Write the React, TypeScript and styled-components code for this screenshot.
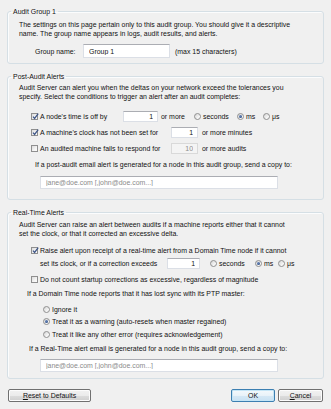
import styled, { createGlobalStyle } from 'styled-components';

const Global = createGlobalStyle`
  html, body {
    margin: 0;
    padding: 0;
    background: #f0f0f0;
  }
  body {
    font-family: "Liberation Sans", Arial, sans-serif;
    font-size: 6.95px;
    color: #111;
  }
`

const Page = styled.div`
  width: 331px;
  height: 409px;
  box-sizing: border-box;
  padding: 7px 7px 0 7px;
  display: flex;
  flex-direction: column;
`

const Group = styled.fieldset<{ $top: number; $bottom: number }>`
  margin: ${p => p.$top}px 0 0 0;
  padding: 0 6px ${p => p.$bottom}px 3px;
  min-width: 0;
  border: 1px solid #d5dfe5;
  border-radius: 3px;
  box-shadow: inset 1px 1px 0 #fbfcfd;
`

const Legend = styled.legend`
  padding: 0 2px;
  line-height: 9px;
`

const Body = styled.div`
  padding-left: 8px;
  display: flex;
  flex-direction: column;
`

const Para = styled.p<{ $mt: number; $indent?: number }>`
  margin: ${p => p.$mt}px 0 0 ${p => p.$indent ?? 0}px;
  line-height: 9px;
  white-space: nowrap;
`

const Row = styled.div<{ $mt: number; $indent?: number; $h?: number }>`
  display: flex;
  align-items: center;
  height: ${p => p.$h ?? 12}px;
  margin: ${p => p.$mt}px 0 0 ${p => p.$indent ?? 0}px;
  white-space: nowrap;
`

const Label = styled.span<{ $w?: number; $ml?: number }>`
  flex: none;
  width: ${p => (p.$w ? `${p.$w}px` : 'auto')};
  margin-left: ${p => p.$ml ?? 0}px;
  line-height: 9px;
`

const Field = styled.input<{ $w: number; $h?: number; $right?: boolean }>`
  flex: none;
  box-sizing: border-box;
  width: ${p => p.$w}px;
  height: ${p => p.$h ?? 11}px;
  margin: 0;
  padding: 0 4px 0 5px;
  font: inherit;
  color: #111;
  text-align: ${p => (p.$right ? 'right' : 'left')};
  background: #fff;
  border: 1px solid #dbdfe6;
  border-top-color: #abadb3;
  border-radius: 0;
  outline: none;
  &:disabled {
    background: #f4f4f4;
    color: #8d8d8d;
    border-color: #d9d9d9;
  }
  &::placeholder {
    color: #8a8a8a;
  }
`

const Box = styled.span`
  position: relative;
  flex: none;
  width: 7px;
  height: 7px;
  box-sizing: border-box;
  border: 1px solid #8f8f8f;
  background: linear-gradient(135deg, #dcdcdc 0%, #f4f4f4 60%, #fdfdfd 100%);
  > svg {
    position: absolute;
    left: -1px;
    top: -2px;
    overflow: visible;
  }
`

const Dot = styled.span<{ $on?: boolean }>`
  position: relative;
  flex: none;
  width: 7px;
  height: 7px;
  box-sizing: border-box;
  border-radius: 50%;
  border: 1px solid #8f8f8f;
  background: linear-gradient(135deg, #d6d6d6 0%, #f6f6f6 70%, #ffffff 100%);
  &::after {
    content: '';
    display: ${p => (p.$on ? 'block' : 'none')};
    position: absolute;
    left: 1px;
    top: 1px;
    width: 3px;
    height: 3px;
    border-radius: 50%;
    background: radial-gradient(circle at 35% 35%, #6d8bc0, #1d3c73);
  }
`

const Option = styled.span<{ $w?: number; $ml?: number }>`
  flex: none;
  display: flex;
  align-items: center;
  gap: 2px;
  width: ${p => (p.$w ? `${p.$w}px` : 'auto')};
  margin-left: ${p => p.$ml ?? 0}px;
  line-height: 9px;
`

const Footer = styled.div`
  display: flex;
  justify-content: space-between;
  margin: 10px 1px 0 1px;
  > div {
    display: flex;
    gap: 3px;
  }
`

const Button = styled.button<{ $w: number; $primary?: boolean }>`
  box-sizing: border-box;
  width: ${p => p.$w}px;
  height: 13px;
  margin: 0;
  padding: 0;
  font: inherit;
  color: #111;
  border-radius: 2px;
  border: 1px solid ${p => (p.$primary ? '#3c7fb1' : '#707070')};
  background: ${p =>
    p.$primary
      ? 'linear-gradient(#f4f9fc 0%, #e8f2f9 50%, #d6e8f5 51%, #c8e1f3 100%)'
      : 'linear-gradient(#f2f2f2 0%, #ebebeb 50%, #dddddd 51%, #cfcfcf 100%)'};
  box-shadow: inset 0 0 0 1px ${p => (p.$primary ? '#c4e5f6' : '#fcfcfc')};
`

function Check({ on }: { on?: boolean }) {
  return (
    <Box>
      {on && (
        <svg width="9" height="9" viewBox="0 0 9 9">
          <path d="M2 4.6 L3.6 6.4 L7.2 1.6" fill="none" stroke="#3f5788" strokeWidth="1.3" />
        </svg>
      )}
    </Box>
  )
}

function Units({ pick, widths, first }: { pick: number; widths: number[]; first: number }) {
  const names = ['seconds', 'ms', 'μs']
  return (
    <>
      {names.map((n, i) => (
        <Option key={n} $w={widths[i]} $ml={i === 0 ? first : 0}>
          <Dot $on={i === pick} />
          <span>{n}</span>
        </Option>
      ))}
    </>
  )
}

const emailHint = 'jane@doe.com [,john@doe.com...]'

export default function App() {
  return (
    <Page>
      <Global />
      <Group $top={0} $bottom={5}>
        <Legend>Audit Group 1</Legend>
        <Body>
          <Para $mt={4}>
            The settings on this page pertain only to this audit group. You should give it a descriptive
            <br />
            name. The group name appears in logs, audit results, and alerts.
          </Para>
          <Row $mt={6} $h={14} $indent={16}>
            <Label $w={48}>Group name:</Label>
            <Field $w={87} $h={14} defaultValue="Group 1" />
            <Label $ml={5}>(max 15 characters)</Label>
          </Row>
        </Body>
      </Group>

      <Group $top={8} $bottom={10}>
        <Legend>Post-Audit Alerts</Legend>
        <Body>
          <Para $mt={2}>
            Audit Server can alert you when the deltas on your network exceed the tolerances you
            <br />
            specify. Select the conditions to trigger an alert after an audit completes:
          </Para>
          <Row $mt={9} $indent={12}>
            <Check on />
            <Label $w={83} $ml={2}>A node's time is off by</Label>
            <Field $w={35} $right defaultValue="1" />
            <Label $w={33} $ml={3}>or more</Label>
            <Units pick={1} widths={[43, 26, 0]} first={0} />
          </Row>
          <Row $mt={4} $indent={12}>
            <Check on />
            <Label $w={131} $ml={2}>A machine's clock has not been set for</Label>
            <Field $w={27} $right defaultValue="1" />
            <Label $ml={4}>or more minutes</Label>
          </Row>
          <Row $mt={4} $indent={12}>
            <Check />
            <Label $w={131} $ml={2}>An audited machine fails to respond for</Label>
            <Field $w={27} $right disabled defaultValue="10" />
            <Label $ml={4}>or more audits</Label>
          </Row>
          <Para $mt={6} $indent={16}>
            If a post-audit email alert is generated for a node in this audit group, send a copy to:
          </Para>
          <Row $mt={7} $h={13} $indent={21}>
            <Field $w={238} $h={13} placeholder={emailHint} />
          </Row>
        </Body>
      </Group>

      <Group $top={8} $bottom={6}>
        <Legend>Real-Time Alerts</Legend>
        <Body>
          <Para $mt={3}>
            Audit Server can raise an alert between audits if a machine reports either that it cannot
            <br />
            set the clock, or that it corrected an excessive delta.
          </Para>
          <Row $mt={8} $h={9} $indent={12}>
            <Check on />
            <Label $ml={2}>
              Raise alert upon receipt of a real-time alert from a Domain Time node if it cannot
            </Label>
          </Row>
          <Row $mt={2} $indent={21}>
            <Label $w={127}>set its clock, or if a correction exceeds</Label>
            <Field $w={33} $right defaultValue="1" />
            <Units pick={1} widths={[45, 23, 0]} first={10} />
          </Row>
          <Row $mt={4} $indent={12}>
            <Check />
            <Label $ml={2}>Do not count startup corrections as excessive, regardless of magnitude</Label>
          </Row>
          <Para $mt={4} $indent={8}>
            If a Domain Time node reports that it has lost sync with its PTP master:
          </Para>
          <Row $mt={5} $h={12.5} $indent={24}>
            <Option><Dot /><span>Ignore it</span></Option>
          </Row>
          <Row $mt={0} $h={12.5} $indent={24}>
            <Option><Dot $on /><span>Treat it as a warning (auto-resets when master regained)</span></Option>
          </Row>
          <Row $mt={0} $h={12.5} $indent={24}>
            <Option><Dot /><span>Treat it like any other error (requires acknowledgement)</span></Option>
          </Row>
          <Para $mt={3} $indent={10}>
            If a Real-Time alert email is generated for a node in this audit group, send a copy to:
          </Para>
          <Row $mt={6} $h={13} $indent={21}>
            <Field $w={238} $h={13} placeholder={emailHint} />
          </Row>
        </Body>
      </Group>

      <Footer>
        <Button $w={83}><u>R</u>eset to Defaults</Button>
        <div>
          <Button $w={44} $primary>OK</Button>
          <Button $w={45}><u>C</u>ancel</Button>
        </div>
      </Footer>
    </Page>
  )
}
